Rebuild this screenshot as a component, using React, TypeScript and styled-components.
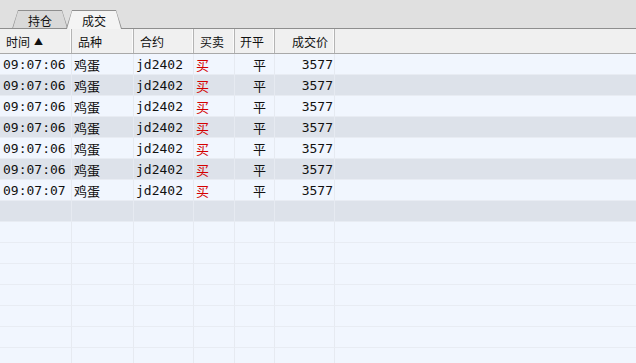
import React from 'react';
import styled, { createGlobalStyle } from 'styled-components';

const GlobalStyle = createGlobalStyle`
  html, body {
    margin: 0;
    padding: 0;
    background: #f2f6fd;
  }
  body {
    font-family: "Noto Sans CJK SC", "DejaVu Sans", sans-serif;
  }
`;

const Page = styled.div`
  width: 636px;
  height: 363px;
  overflow: hidden;
  display: flex;
  flex-direction: column;
  background: #f2f6fd;
`;

const TabBar = styled.div`
  height: 29px;
  flex: none;
  background: #e0e0e0;
  display: flex;
  align-items: flex-end;
  padding-left: 12px;
  border-bottom: 1px solid #8e8e8e;
  box-sizing: border-box;
`;

const TabOuter = styled.div<{ $active?: boolean }>`
  position: relative;
  width: 56px;
  height: 19px;
  margin-right: -2px;
  margin-bottom: -1px;
  background: #8e8e8e;
  clip-path: polygon(6px 0, 50px 0, 56px 100%, 0 100%);
  z-index: ${p => (p.$active ? 2 : 1)};
`;

const TabInner = styled.div<{ $active?: boolean }>`
  position: absolute;
  inset: 1px 1px ${p => (p.$active ? '0' : '1px')} 1px;
  background: ${p => (p.$active ? '#f4f4f4' : '#d9d9d9')};
  clip-path: polygon(5px 0, 49px 0, 54px 100%, 0 100%);
  display: flex;
  align-items: center;
  justify-content: center;
  font-size: 12px;
  color: #111;
  padding-top: 1px;
`;

const Columns = '72px 62px 60px 41px 40px 60px 1fr';

const HeaderRow = styled.div`
  display: grid;
  grid-template-columns: ${Columns};
  height: 24px;
  flex: none;
  background: #f0f0f0;
  border-bottom: 1px solid #a9a9a9;
`;

const HeadCell = styled.div<{ $align?: string; $pad?: number }>`
  display: flex;
  align-items: center;
  justify-content: ${p => p.$align || 'flex-start'};
  padding: 0 ${p => p.$pad ?? 6}px;
  font-size: 12px;
  color: #111;
  border-right: 1px solid #b4b4b4;
  box-shadow: inset -1px 0 0 #fbfbfb;
  white-space: nowrap;

  &:last-child {
    border-right: none;
    box-shadow: none;
  }
`;

const Arrow = styled.span`
  font-size: 9px;
  margin-left: 4px;
`;

const Body = styled.div`
  flex: 1;
  border-left: 1px solid #8f949b;
  display: flex;
  flex-direction: column;
`;

const Row = styled.div<{ $dark?: boolean }>`
  display: grid;
  grid-template-columns: ${Columns};
  height: 21px;
  flex: none;
  margin-left: -1px;
  background: ${p => (p.$dark ? '#dde2ea' : '#f1f6fe')};
`;

const Cell = styled.div<{ $align?: string; $color?: string; $mono?: boolean; $pad?: number }>`
  display: flex;
  align-items: center;
  justify-content: ${p => p.$align || 'flex-start'};
  padding: 1px ${p => p.$pad ?? 2}px 0;
  font-family: ${p => (p.$mono ? '"DejaVu Sans Mono", "Noto Sans CJK SC", monospace' : '"Noto Sans CJK SC", sans-serif')};
  font-size: 13px;
  color: ${p => p.$color || '#111'};
  border-right: 1px solid #e6eaf1;
  border-bottom: 1px solid #e8ecf3;
  box-sizing: border-box;
  white-space: nowrap;
  overflow: hidden;

  &:last-child {
    border-right: none;
  }
`;

interface Trade {
  time: string;
  name: string;
  code: string;
  side: string;
  offset: string;
  price: string;
}

const trades: Trade[] = [
  { time: '09:07:06', name: '鸡蛋', code: 'jd2402', side: '买', offset: '平', price: '3577' },
  { time: '09:07:06', name: '鸡蛋', code: 'jd2402', side: '买', offset: '平', price: '3577' },
  { time: '09:07:06', name: '鸡蛋', code: 'jd2402', side: '买', offset: '平', price: '3577' },
  { time: '09:07:06', name: '鸡蛋', code: 'jd2402', side: '买', offset: '平', price: '3577' },
  { time: '09:07:06', name: '鸡蛋', code: 'jd2402', side: '买', offset: '平', price: '3577' },
  { time: '09:07:06', name: '鸡蛋', code: 'jd2402', side: '买', offset: '平', price: '3577' },
  { time: '09:07:07', name: '鸡蛋', code: 'jd2402', side: '买', offset: '平', price: '3577' },
];

const TOTAL_ROWS = 15;

function App() {
  const empties = Array.from({ length: TOTAL_ROWS - trades.length });
  return (
    <Page>
      <GlobalStyle />
      <TabBar>
        <TabOuter>
          <TabInner>持仓</TabInner>
        </TabOuter>
        <TabOuter $active>
          <TabInner $active>成交</TabInner>
        </TabOuter>
      </TabBar>
      <HeaderRow>
        <HeadCell>时间<Arrow>▲</Arrow></HeadCell>
        <HeadCell>品种</HeadCell>
        <HeadCell>合约</HeadCell>
        <HeadCell>买卖</HeadCell>
        <HeadCell $pad={5}>开平</HeadCell>
        <HeadCell $align="flex-end" $pad={6}>成交价</HeadCell>
        <HeadCell />
      </HeaderRow>
      <Body>
        {trades.map((t, i) => (
          <Row key={i} $dark={i % 2 === 1}>
            <Cell $mono $pad={3}>{t.time}</Cell>
            <Cell $pad={2}>{t.name}</Cell>
            <Cell $mono $pad={2}>{t.code}</Cell>
            <Cell $color="#d40000" $pad={2}>{t.side}</Cell>
            <Cell $align="flex-end" $pad={8}>{t.offset}</Cell>
            <Cell $mono $align="flex-end" $pad={1}>{t.price}</Cell>
            <Cell />
          </Row>
        ))}
        {empties.map((_, i) => (
          <Row key={'e' + i} $dark={i === 0}>
            <Cell /><Cell /><Cell /><Cell /><Cell /><Cell /><Cell />
          </Row>
        ))}
      </Body>
    </Page>
  );
}

export default App;
